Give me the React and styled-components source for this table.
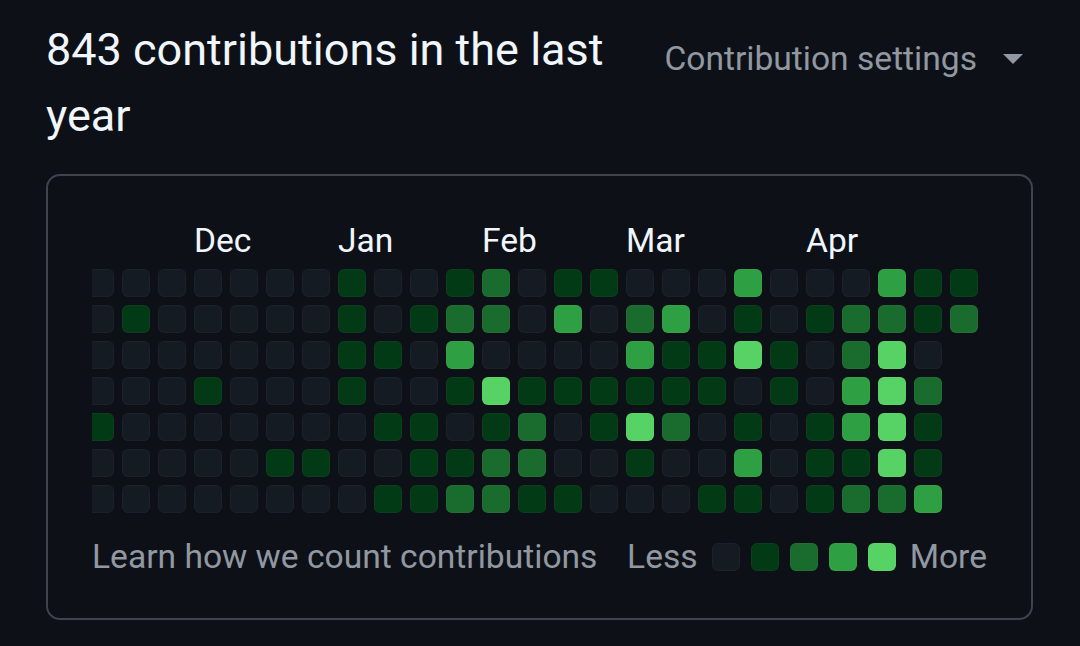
import React from "react";
import styled, { createGlobalStyle } from "styled-components";

// weeks run left → right, each row is one weekday (Sun..Sat)
const ROWS = [
  [0,0,0,0,0,0,0,1,0,0,1,2,0,1,1,0,0,0,3,0,0,0,3,1,1],
  [0,1,0,0,0,0,0,1,0,1,2,2,0,3,0,2,3,0,1,0,1,2,2,1,2],
  [0,0,0,0,0,0,0,1,1,0,3,0,0,0,0,3,1,1,4,1,0,2,4,0],
  [0,0,0,1,0,0,0,1,0,0,1,4,1,1,1,1,1,1,0,1,0,3,4,2],
  [1,0,0,0,0,0,0,0,1,1,0,1,2,0,1,4,2,0,1,0,1,3,4,1],
  [0,0,0,0,0,1,1,0,0,1,1,2,2,0,0,1,0,0,3,0,1,1,4,1],
  [0,0,0,0,0,0,0,0,1,1,2,2,1,1,0,0,0,1,1,0,1,2,2,3],
];

const WEEKS = 25;

const MONTHS = [
  { name: "Dec", col: 3 },
  { name: "Jan", col: 7 },
  { name: "Feb", col: 11 },
  { name: "Mar", col: 15 },
  { name: "Apr", col: 20 },
];

const LEVELS = ["#151b23", "#033a16", "#196c2e", "#2ea043", "#56d364"];

const GlobalStyle = createGlobalStyle`
  html, body {
    margin: 0;
    background: #0d1117;
  }
  body {
    font-family: Roboto, "Liberation Sans", Arial, sans-serif;
    color: #f0f6fc;
  }
`;

const App = () => {
  const cells = [];
  for (let w = 0; w < WEEKS; w++) {
    for (let d = 0; d < 7; d++) {
      const level = ROWS[d][w];
      if (level === undefined) continue;
      cells.push(<Cell key={`${w}-${d}`} $level={level} />);
    }
  }

  return (
    <Page>
      <GlobalStyle />
      <Header>
        <Title>843 contributions in the last year</Title>
        <Settings>
          Contribution settings
          <svg width="20" height="10" viewBox="0 0 20 10">
            <polygon points="0,0 20,0 10,10" fill="#9198a1" />
          </svg>
        </Settings>
      </Header>

      <Box>
        <GraphScroll>
          <Graph>
            <MonthRow>
              {MONTHS.map((m) => (
                <Month key={m.name} $col={m.col}>{m.name}</Month>
              ))}
            </MonthRow>
            <CellGrid>{cells}</CellGrid>
          </Graph>
        </GraphScroll>

        <Footer>
          <LearnLink>Learn how we count contributions</LearnLink>
          <Legend>
            <span>Less</span>
            <LegendCells>
              {LEVELS.map((_, i) => (
                <Cell key={i} $level={i} />
              ))}
            </LegendCells>
            <span>More</span>
          </Legend>
        </Footer>
      </Box>
    </Page>
  );
};

export default App;

const Page = styled.div`
  padding: 17px 47px 0 46px;
`;

const Header = styled.div`
  display: flex;
  align-items: flex-start;
  gap: 24px;
`;

const Title = styled.h2`
  flex: 1;
  margin: 0;
  font-size: 45px;
  line-height: 66px;
  font-weight: 400;
  color: #f0f6fc;
`;

const Settings = styled.div`
  display: flex;
  align-items: center;
  gap: 26px;
  padding: 16px 10px 0 0;
  font-size: 33.6px;
  line-height: 51px;
  color: #9198a1;
  white-space: nowrap;
`;

const Box = styled.div`
  margin-top: 25px;
  border: 2px solid #3d444d;
  border-radius: 14px;
  padding: 44.5px 44px 41px 44px;
`;

const GraphScroll = styled.div`
  display: flex;
  justify-content: flex-end;
  overflow: hidden;
  padding-right: 9px;
`;

const Graph = styled.div`
  display: flex;
  flex-direction: column;
  gap: 8px;
  flex-shrink: 0;
`;

const MonthRow = styled.div`
  display: grid;
  grid-template-columns: repeat(${WEEKS}, 28px);
  column-gap: 8px;
  height: 40px;
  line-height: 40px;
  font-size: 33.6px;
  color: #f0f6fc;
`;

const Month = styled.div`
  grid-column: ${(p) => p.$col + 1} / span 3;
  white-space: nowrap;
`;

const CellGrid = styled.div`
  display: grid;
  grid-template-rows: repeat(7, 28px);
  grid-auto-flow: column;
  grid-auto-columns: 28px;
  gap: 8px;
`;

const Cell = styled.div`
  width: 28px;
  height: 28px;
  border-radius: 6px;
  background: ${(p) => LEVELS[p.$level]};
  outline: 1px solid rgba(255, 255, 255, 0.03);
  outline-offset: -1px;
`;

const Footer = styled.div`
  display: flex;
  justify-content: space-between;
  align-items: center;
  margin-top: 24px;
  font-size: 33.6px;
  line-height: 40px;
  color: #9198a1;
`;

const LearnLink = styled.span`
  white-space: nowrap;
`;

const Legend = styled.div`
  display: flex;
  align-items: center;
  gap: 14px;
`;

const LegendCells = styled.div`
  display: flex;
  gap: 11px;
`;
